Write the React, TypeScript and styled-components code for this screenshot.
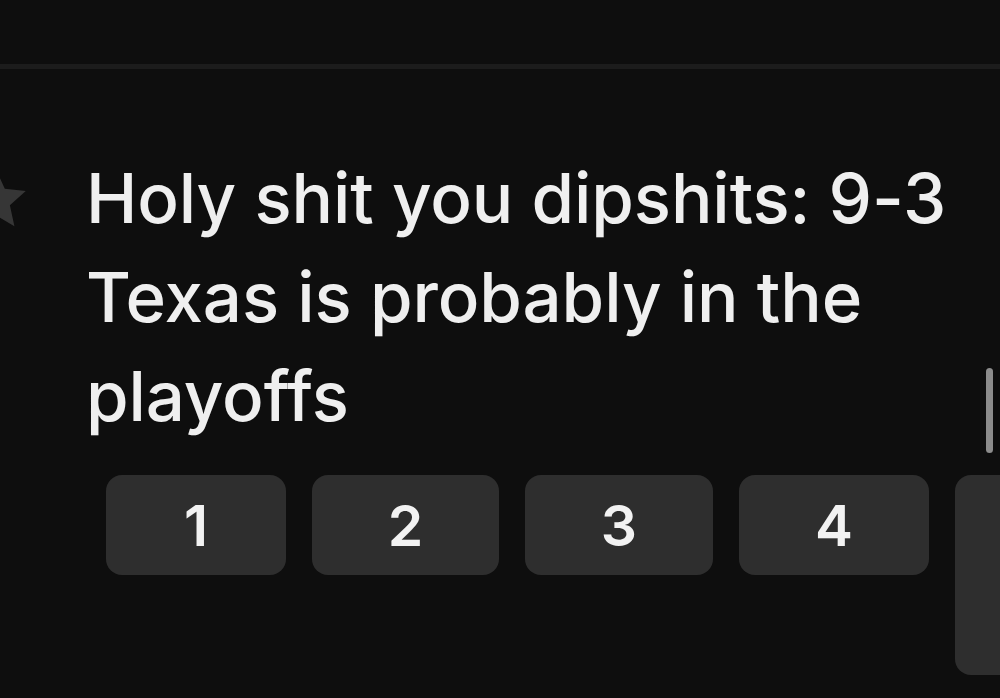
import React from 'react'
import styled, { createGlobalStyle } from 'styled-components'

const GlobalStyle = createGlobalStyle`
  html, body {
    margin: 0;
    padding: 0;
    background: #0e0e0e;
    overflow: hidden;
  }
`

const keys = ['1', '2', '3', '4']
const keyWidths = [180, 187, 188, 190]

const App = () => {
  return (
    <Screen>
      <GlobalStyle />
      <TopBar />
      <Content>
        <QuestionRow>
          <Star viewBox="0 0 24 24">
            <path d="M12 1.5l3.1 6.9 7.4.8-5.6 5 1.6 7.4L12 17.8l-6.5 3.8 1.6-7.4-5.6-5 7.4-.8z" />
          </Star>
          <Question>Holy shit you dipshits: 9-3 Texas is probably in the playoffs</Question>
        </QuestionRow>
        <Keypad>
          {keys.map((k, i) => (
            <Key key={k} $width={keyWidths[i]}>{k}</Key>
          ))}
          <TallKey />
        </Keypad>
      </Content>
      <ScrollThumb />
    </Screen>
  )
}

const Screen = styled.div`
  position: relative;
  width: 1000px;
  height: 698px;
  overflow: hidden;
  background: #0e0e0e;
  display: flex;
  flex-direction: column;
  font-family: Inter, 'Liberation Sans', sans-serif;
`

const TopBar = styled.div`
  height: 64px;
  flex-shrink: 0;
  border-bottom: 5px solid #1c1c1c;
`

const Content = styled.div`
  display: flex;
  flex-direction: column;
  padding-top: 80px;
`

const QuestionRow = styled.div`
  display: flex;
  align-items: flex-start;
`

const Star = styled.svg`
  width: 68px;
  height: 68px;
  flex-shrink: 0;
  margin-left: -38px;
  margin-top: 16px;
  margin-right: 56px;
  fill: #363636;
`

const Question = styled.div`
  width: 890px;
  font-size: 69px;
  line-height: 99px;
  font-weight: 450;
  letter-spacing: -0.1px;
  color: #efefef;
`

const Keypad = styled.div`
  display: flex;
  align-items: flex-start;
  gap: 26px;
  margin-top: 29px;
  padding-left: 106px;
`

const Key = styled.div<{ $width: number }>`
  width: ${p => p.$width}px;
  height: 100px;
  flex-shrink: 0;
  border-radius: 16px;
  background: #2e2e2e;
  color: #f2f2f2;
  font-size: 57px;
  font-weight: 600;
  display: flex;
  align-items: center;
  justify-content: center;
`

const TallKey = styled.div`
  width: 120px;
  height: 200px;
  flex-shrink: 0;
  border-radius: 16px;
  background: #2e2e2e;
`

const ScrollThumb = styled.div`
  position: absolute;
  left: 986px;
  top: 368px;
  width: 7px;
  height: 85px;
  border-radius: 4px;
  background: #8c8c8c;
`

export default App
